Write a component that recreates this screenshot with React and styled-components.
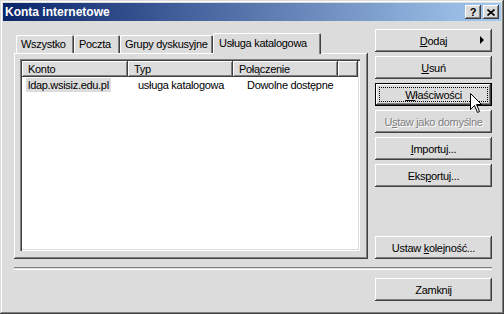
import styled, { createGlobalStyle } from "styled-components";

const Global = createGlobalStyle`
  body {
    margin: 0;
    font-family: "Liberation Sans", Arial, sans-serif;
    font-size: 11px;
    background: #dcdcdc;
  }
`;

const raised = `
  box-shadow: inset -1px -1px #404040, inset 1px 1px #ffffff,
    inset -2px -2px #808080, inset 2px 2px #dcdcdc;
`;

const Window = styled.div`
  position: relative;
  width: 504px;
  height: 314px;
  box-sizing: border-box;
  padding: 3px;
  background: #dcdcdc;
  box-shadow: inset -1px -1px #404040, inset 1px 1px #dcdcdc,
    inset -2px -2px #808080, inset 2px 2px #ffffff;
  display: flex;
  flex-direction: column;
  color: #000;
  letter-spacing: -0.3px;
`;

const TitleBar = styled.div`
  height: 18px;
  display: flex;
  align-items: center;
  justify-content: space-between;
  padding: 0 2px 0 2px;
  background: linear-gradient(to right, #0a246a, #a6caf0);
`;

const Title = styled.span`
  color: #fff;
  font-weight: bold;
  font-size: 12px;
  letter-spacing: 0;
`;

const TitleButtons = styled.div`
  display: flex;
  gap: 2px;
`;

const TitleButton = styled.div`
  width: 16px;
  height: 14px;
  box-sizing: border-box;
  background: #dcdcdc;
  ${raised}
  display: flex;
  align-items: center;
  justify-content: center;
  font-weight: bold;
  font-size: 11px;
  line-height: 1;
`;

const Body = styled.div`
  display: flex;
  gap: 7px;
  padding: 8px 9px 0 11px;
  height: 230px;
`;

const LeftCol = styled.div`
  width: 354px;
  padding-top: 4px;
  display: flex;
  flex-direction: column;
`;

const TabStrip = styled.div`
  height: 20px;
  display: flex;
  align-items: flex-end;
  padding-left: 2px;
  position: relative;
  z-index: 1;
`;

const Tab = styled.div`
  box-sizing: border-box;
  width: ${(p) => p.$w}px;
  height: ${(p) => (p.$active ? 21 : 18)}px;
  margin-bottom: ${(p) => (p.$active ? -1 : 0)}px;
  background: #dcdcdc;
  border-radius: 2px 2px 0 0;
  box-shadow: inset 1px 1px #ffffff, inset -1px 0 #404040, inset -2px 0 #808080;
  display: flex;
  align-items: center;
  padding-left: ${(p) => (p.$active ? 6 : 5)}px;
  padding-bottom: ${(p) => (p.$active ? 2 : 0)}px;
  white-space: nowrap;
`;

const Panel = styled.div`
  flex: 1;
  box-sizing: border-box;
  padding: 6px 8px 8px 6px;
  ${raised}
`;

const ListView = styled.div`
  height: 100%;
  box-sizing: border-box;
  padding: 2px;
  background: #fff;
  box-shadow: inset 1px 1px #808080, inset 2px 2px #404040,
    inset -1px -1px #ffffff, inset -2px -2px #dcdcdc;
`;

const HeaderRow = styled.div`
  display: flex;
  height: 16px;
`;

const HeaderCell = styled.div`
  box-sizing: border-box;
  width: ${(p) => p.$w}px;
  flex: ${(p) => (p.$w ? "none" : 1)};
  background: #dcdcdc;
  box-shadow: inset -1px -1px #404040, inset 1px 1px #ffffff, inset -2px -2px #808080;
  padding-left: 6px;
  display: flex;
  align-items: center;
  white-space: nowrap;
`;

const Row = styled.div`
  display: flex;
  height: 14px;
  margin-top: 1px;
`;

const Cell = styled.div`
  width: ${(p) => p.$w}px;
  padding-left: 4px;
  display: flex;
  align-items: center;
  white-space: nowrap;
`;

const CellText = styled.span`
  padding: 0 2px;
  line-height: 14px;
  background: ${(p) => (p.$selected ? "#dcdcdc" : "transparent")};
`;

const RightCol = styled.div`
  width: 117px;
  display: flex;
  flex-direction: column;
  gap: 4px;
`;

const Spacer = styled.div`
  flex: 1;
`;

const Button = styled.div`
  position: relative;
  box-sizing: border-box;
  width: 117px;
  height: 23px;
  flex: none;
  background: #dcdcdc;
  display: flex;
  align-items: center;
  justify-content: center;
  white-space: nowrap;
  color: ${(p) => (p.$disabled ? "#808080" : "#000")};
  text-shadow: ${(p) => (p.$disabled ? "1px 1px #ffffff" : "none")};
  ${(p) =>
    p.$default
      ? `box-shadow: inset 0 0 0 1px #000, inset -2px -2px #404040, inset 2px 2px #ffffff, inset -3px -3px #808080;`
      : raised}
`;

const FocusRing = styled.div`
  position: absolute;
  inset: 4px;
  border: 1px dotted #000;
`;

const Arrow = styled.span`
  position: absolute;
  right: 8px;
  top: 7px;
  width: 0;
  height: 0;
  border-top: 4px solid transparent;
  border-bottom: 4px solid transparent;
  border-left: 4px solid #000;
`;

const Separator = styled.div`
  margin: 8px 9px 0 11px;
  height: 1px;
  border-top: 1px solid #808080;
  border-bottom: 1px solid #ffffff;
`;

const Footer = styled.div`
  display: flex;
  justify-content: flex-end;
  padding: 8px 9px 0 11px;
`;

const Cursor = styled.svg`
  position: absolute;
  left: 470px;
  top: 93px;
`;

export default function App() {
  return (
    <>
      <Global />
      <Window>
        <TitleBar>
          <Title>Konta internetowe</Title>
          <TitleButtons>
            <TitleButton>?</TitleButton>
            <TitleButton>
              <svg width="8" height="7" viewBox="0 0 8 7">
                <path d="M0.5 0.5 L7.5 6.5 M7.5 0.5 L0.5 6.5" stroke="#000" strokeWidth="1.6" />
              </svg>
            </TitleButton>
          </TitleButtons>
        </TitleBar>

        <Body>
          <LeftCol>
            <TabStrip>
              <Tab $w={58}>Wszystko</Tab>
              <Tab $w={46}>Poczta</Tab>
              <Tab $w={93}>Grupy dyskusyjne</Tab>
              <Tab $w={108} $active>Usługa katalogowa</Tab>
            </TabStrip>
            <Panel>
              <ListView>
                <HeaderRow>
                  <HeaderCell $w={106}>Konto</HeaderCell>
                  <HeaderCell $w={105}>Typ</HeaderCell>
                  <HeaderCell $w={105}>Połączenie</HeaderCell>
                  <HeaderCell />
                </HeaderRow>
                <Row>
                  <Cell $w={106}>
                    <CellText $selected>ldap.wsisiz.edu.pl</CellText>
                  </Cell>
                  <Cell $w={105}>
                    <CellText>usługa katalogowa</CellText>
                  </Cell>
                  <Cell $w={105}>
                    <CellText>Dowolne dostępne</CellText>
                  </Cell>
                </Row>
              </ListView>
            </Panel>
          </LeftCol>

          <RightCol>
            <Button>
              <span><u>D</u>odaj</span>
              <Arrow />
            </Button>
            <Button>
              <span><u>U</u>suń</span>
            </Button>
            <Button $default>
              <FocusRing />
              <span><u>W</u>łaściwości</span>
            </Button>
            <Button $disabled>
              <span>U<u>s</u>taw jako domyślne</span>
            </Button>
            <Button>
              <span><u>I</u>mportuj...</span>
            </Button>
            <Button>
              <span>Eks<u>p</u>ortuj...</span>
            </Button>
            <Spacer />
            <Button>
              <span>Ustaw <u>k</u>olejność...</span>
            </Button>
          </RightCol>
        </Body>

        <Separator />
        <Footer>
          <Button>Zamknij</Button>
        </Footer>

        <Cursor width="13" height="21" viewBox="0 0 13 21">
          <path
            d="M0.5 0.5 L0.5 16.5 L4.5 12.5 L7.5 19.5 L9.5 18.5 L6.5 11.5 L11.5 11.5 Z"
            fill="#fff"
            stroke="#000"
            strokeWidth="1"
          />
        </Cursor>
      </Window>
    </>
  );
}
